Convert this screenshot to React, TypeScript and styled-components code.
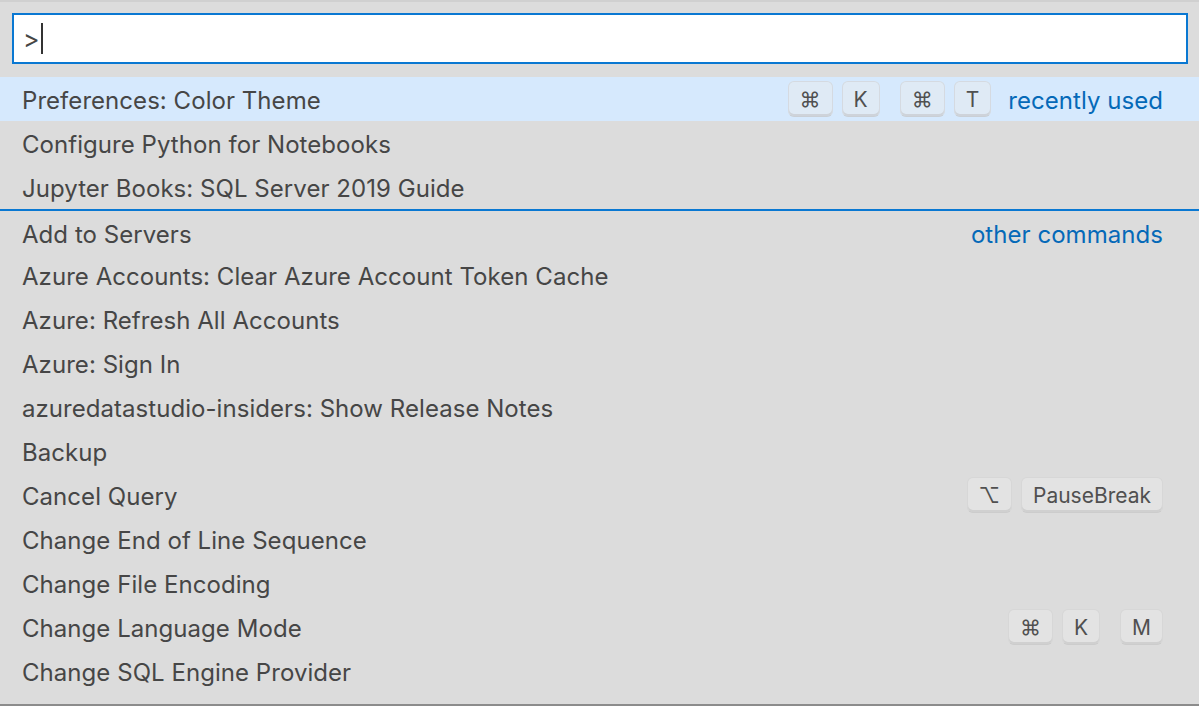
import React from 'react';
import styled, { createGlobalStyle } from 'styled-components';

interface Command {
  label: string;
  keys?: string[][];
  group?: string;
  separator?: boolean;
}

const commands: Command[] = [
  { label: 'Preferences: Color Theme', keys: [['⌘', 'K'], ['⌘', 'T']], group: 'recently used' },
  { label: 'Configure Python for Notebooks' },
  { label: 'Jupyter Books: SQL Server 2019 Guide' },
  { label: 'Add to Servers', group: 'other commands', separator: true },
  { label: 'Azure Accounts: Clear Azure Account Token Cache' },
  { label: 'Azure: Refresh All Accounts' },
  { label: 'Azure: Sign In' },
  { label: 'azuredatastudio-insiders: Show Release Notes' },
  { label: 'Backup' },
  { label: 'Cancel Query', keys: [['⌥', 'PauseBreak']] },
  { label: 'Change End of Line Sequence' },
  { label: 'Change File Encoding' },
  { label: 'Change Language Mode', keys: [['⌘', 'K'], ['M']] },
  { label: 'Change SQL Engine Provider' },
];

const GlobalStyle = createGlobalStyle`
  html, body {
    margin: 0;
    padding: 0;
    background: #dcdcdc;
    overflow: hidden;
  }
`;

const App: React.FC = () => (
  <>
    <GlobalStyle />
    <Picker>
      <InputWrap>
        <InputBox>
          <span>&gt;</span>
          <Caret />
        </InputBox>
      </InputWrap>
      <List>
        {commands.map((cmd, i) => (
          <Row key={cmd.label} isActive={i === 0} hasSeparator={!!cmd.separator}>
            <Label>{cmd.label}</Label>
            <RowRight>
              {cmd.keys && (
                <Keybinding>
                  {cmd.keys.map((chord, c) => (
                    <Chord key={c}>
                      {chord.map((k) => (
                        <Key key={k}>{k}</Key>
                      ))}
                    </Chord>
                  ))}
                </Keybinding>
              )}
              {cmd.group && <GroupLabel>{cmd.group}</GroupLabel>}
            </RowRight>
          </Row>
        ))}
      </List>
    </Picker>
  </>
);

const Picker = styled.div`
  width: 1199px;
  height: 706px;
  box-sizing: border-box;
  display: flex;
  flex-direction: column;
  background: #dcdcdc;
  border-top: 2px solid #d0d0d0;
  border-bottom: 2px solid #8c8c8c;
  font-family: Inter, 'Liberation Sans', sans-serif;
  color: #464646;
`;

const InputWrap = styled.div`
  padding: 11px 11px 13px 12px;
`;

const InputBox = styled.div`
  height: 51px;
  box-sizing: border-box;
  border: 2px solid #0a78d2;
  background: #fff;
  display: flex;
  align-items: center;
  padding-left: 9px;
  font-size: 25px;
  color: #464646;
`;

const Caret = styled.span`
  display: inline-block;
  width: 2px;
  height: 31px;
  margin-left: 1px;
  background: #333;
`;

const List = styled.div`
  flex: 1;
  display: flex;
  flex-direction: column;
`;

const Row = styled.div<{ isActive: boolean; hasSeparator: boolean }>`
  height: 44px;
  box-sizing: border-box;
  display: flex;
  align-items: center;
  justify-content: space-between;
  padding: 0 36px 0 22px;
  background: ${({ isActive }) => (isActive ? '#d6e9fd' : 'transparent')};
  border-top: ${({ hasSeparator }) => (hasSeparator ? '2px solid #0a78d2' : 'none')};
  padding-top: ${({ hasSeparator }) => (hasSeparator ? '2px' : '0')};
`;

const Label = styled.div`
  font-size: 24px;
  letter-spacing: 0.05px;
  margin-top: 2px;
  white-space: nowrap;
`;

const RowRight = styled.div`
  display: flex;
  align-items: center;
`;

const Keybinding = styled.div`
  display: flex;
  align-items: center;
  gap: 20px;
`;

const Chord = styled.div`
  display: flex;
  align-items: center;
  gap: 9px;
`;

const Key = styled.span`
  display: inline-flex;
  align-items: center;
  justify-content: center;
  height: 34px;
  padding: 0 11px;
  box-sizing: content-box;
  border-radius: 6px;
  font-size: 21px;
  color: #505050;
  background: rgba(235, 235, 235, 0.45);
  border: 1px solid rgba(200, 200, 200, 0.45);
  border-bottom-color: rgba(180, 180, 180, 0.5);
  box-shadow: inset 0 -2px 0 rgba(185, 185, 185, 0.45);
  font-family: Inter, 'DejaVu Sans', sans-serif;
`;

const GroupLabel = styled.span`
  font-size: 24px;
  letter-spacing: 0.05px;
  margin-top: 2px;
  color: #0569b8;
  margin-left: 17px;
`;

export default App;
